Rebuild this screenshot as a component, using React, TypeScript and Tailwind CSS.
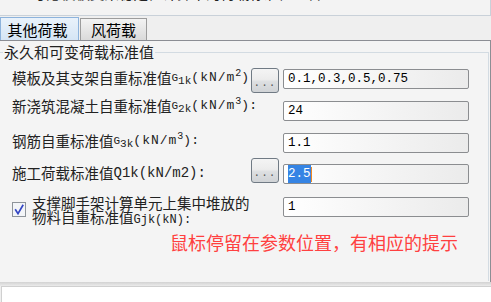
const cjk = "font-['Noto_Sans_CJK_SC','Noto_Sans',sans-serif]";
const mono = "font-['Liberation_Mono','DejaVu_Sans_Mono',monospace]";

function DotsButton() {
  return (
    <button
      type="button"
      className={`flex h-[25px] w-[28px] shrink-0 items-center justify-center rounded-[3px] border border-[#707a84] bg-[linear-gradient(#f4f4f4,#ececec_45%,#dddfe1_55%,#d0d3d6)] pt-[5px] text-[11px] leading-none tracking-[1px] text-[#555] ${mono}`}
    >
      ...
    </button>
  );
}

function Field({ value, selected = false }: { value: string; selected?: boolean }) {
  return (
    <div
      className={`flex h-[20px] w-[186px] shrink-0 items-center rounded-[2px] border border-[#8b8d90] bg-[linear-gradient(to_right,#ffffff,#ebebeb)] pl-[4px] text-[12.5px] text-black ${mono}`}
    >
      {selected ? (
        <>
          <span className="bg-[#3584e4] text-white">{value}</span>
          <span className="h-[15px] w-[1px] bg-[#f08a24]" />
        </>
      ) : (
        value
      )}
    </div>
  );
}

function Unit({ n, exp, colon = false }: { n: string; exp: string; colon?: boolean }) {
  return (
    <span className={`${mono} text-[#222]`}>
      <span className="text-[11px]">G</span>
      <span className="relative top-[3px] text-[11px]">{n}k</span>
      <span className="text-[13px] tracking-[1px]">(kN/m</span>
      <span className="relative -top-[5px] text-[10px]">{exp}</span>
      <span className="text-[13px]">)</span>
      {colon && <span className="text-[13px]">:</span>}
    </span>
  );
}

function CheckMark() {
  return (
    <svg width="14" height="15" viewBox="0 0 14 15" className="shrink-0">
      <rect x="0.5" y="0.5" width="13" height="14" fill="#f3f5f8" stroke="#8e949a" />
      <path d="M3.2 7.2 L6 11.6 L11.2 2.8" fill="none" stroke="#3446c4" strokeWidth="1.7" />
    </svg>
  );
}

export default function App() {
  return (
    <div className={`h-[302px] w-[491px] overflow-hidden bg-[#efefef] text-black ${cjk}`}>
      {/* 上方被裁掉的一行 */}
      <div className="h-[16px] overflow-hidden border-b border-r border-[#c9d1d9] bg-[#f3f3f3]">
        <div className="-mt-[15px] flex h-[16px] items-center pl-[8px] text-[14.5px] leading-[16px] text-[#222]">
          <span className="h-[13px] w-[8px] border border-[#8f8f8f] bg-white" />
          <span className="ml-[16px] whitespace-nowrap">考虑模板支架稳定性计算中的荷载标准值组合</span>
        </div>
      </div>

      {/* 标签页 */}
      <div className="mt-[1px] flex h-[23px] items-end">
        <div className="flex h-[23px] w-[79px] items-center justify-center border border-b-0 border-[#8db3dc] bg-[linear-gradient(#e9f2fb,#d5e5f5)] pr-[4px] text-[15px] leading-none">
          其他荷载
        </div>
        <div className="ml-[1px] flex h-[22px] w-[67px] items-center justify-center border border-b-0 border-[#9c9c9c] bg-[linear-gradient(#f3f3f3,#dadada)] text-[15px] leading-none">
          风荷载
        </div>
      </div>

      {/* 面板 */}
      <div className="h-[242px] border-r border-t border-[#8c8e94] bg-[#f4f4f4] pt-[11px]">
        <div className="mr-[1px] h-[229px] border-r border-t border-[#d3dbe2]">
          <div className="-mt-[11px] ml-[3px] block w-fit bg-[#f4f4f4] px-[1px] text-[15px] leading-[20px] text-[#222]">
            永久和可变荷载标准值
          </div>

          <div className="pl-[12px] text-[14.5px] text-[#222]">
            {/* 第一行 */}
            <div className="mt-[6px] flex h-[26px] items-start">
              <div className="flex h-[19px] w-[239px] shrink-0 items-center whitespace-nowrap">
                模板及其支架自重标准值
                <Unit n="1" exp="2" />
              </div>
              <DotsButton />
              <div className="ml-[4px] mt-[1px]">
                <Field value="0.1,0.3,0.5,0.75" />
              </div>
            </div>

            {/* 第二行 */}
            <div className="mt-[7px] flex h-[20px] items-start">
              <div className="-mt-[5px] flex h-[20px] w-[267px] shrink-0 items-center whitespace-nowrap">
                新浇筑混凝土自重标准值
                <Unit n="2" exp="3" colon />
              </div>
              <div className="ml-[4px]">
                <Field value="24" />
              </div>
            </div>

            {/* 第三行 */}
            <div className="mt-[12px] flex h-[20px] items-start">
              <div className="-mt-[2px] flex h-[20px] w-[267px] shrink-0 items-center whitespace-nowrap">
                钢筋自重标准值
                <Unit n="3" exp="3" colon />
              </div>
              <div className="ml-[4px]">
                <Field value="1.1" />
              </div>
            </div>

            {/* 第四行 */}
            <div className="mt-[5px] flex h-[26px] items-start">
              <div className="mt-[5px] flex h-[20px] w-[239px] shrink-0 items-center whitespace-nowrap">
                施工荷载标准值
                <span className={`${mono} text-[14px]`}>Q1k(kN/m2):</span>
              </div>
              <DotsButton />
              <div className="ml-[4px] mt-[6px]">
                <Field value="2.5" selected />
              </div>
            </div>

            {/* 第五行 */}
            <div className="mt-[13px] flex h-[20px] items-start">
              <div className="flex w-[267px] shrink-0 items-start">
                <div className="mt-[5px]">
                  <CheckMark />
                </div>
                <div className="-mt-[1px] ml-[6px] whitespace-nowrap text-[14.5px] leading-[13.5px]">
                  <div>支撑脚手架计算单元上集中堆放的</div>
                  <div>
                    物料自重标准值
                    <span className={`${mono} text-[12px]`}>Gjk(kN):</span>
                  </div>
                </div>
              </div>
              <div className="ml-[4px]">
                <Field value="1" />
              </div>
            </div>

            {/* 提示 */}
            <div className="mt-[13px] pl-[158px] text-[18px] leading-[24px] text-[#ff4040]">
              鼠标停留在参数位置，有相应的提示
            </div>
          </div>
        </div>
      </div>

      {/* 底部 */}
      <div className="h-[4px] bg-[linear-gradient(#d2d2d2,#ebebeb)]" />
      <div className="ml-[1px] h-[20px] border-l border-t border-[#d0d0d0] bg-white" />
    </div>
  );
}
